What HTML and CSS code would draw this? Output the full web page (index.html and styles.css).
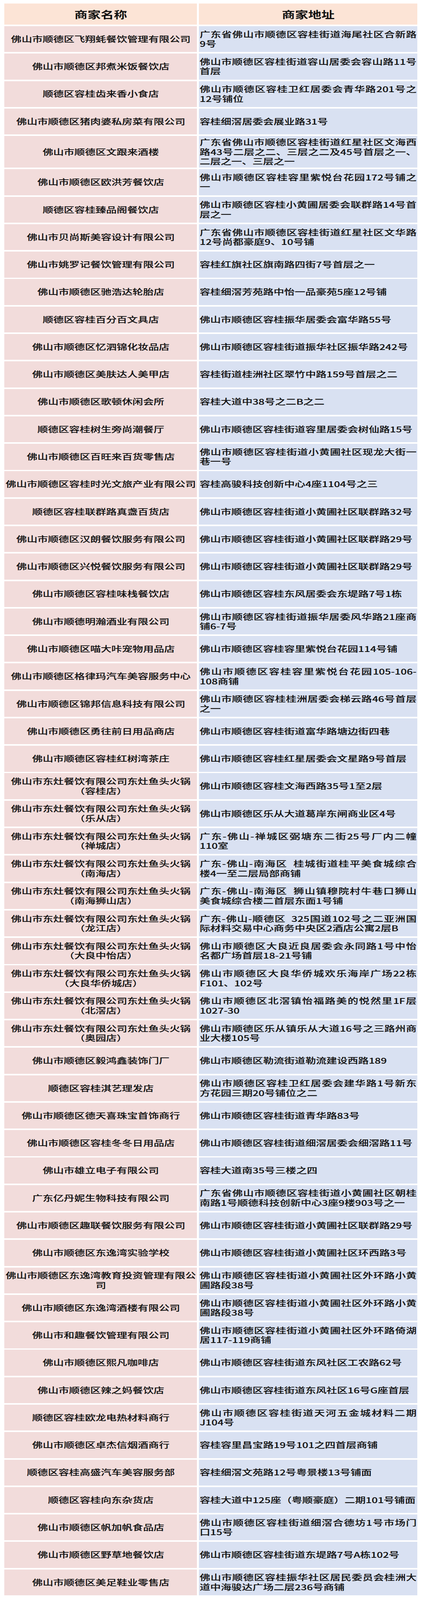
FILE: index.html
```html
<!DOCTYPE html>
<html lang="zh-CN">
<head>
<meta charset="utf-8">
<title>商家名单</title>
<link rel="stylesheet" href="styles.css">
</head>
<body>
<div class="sheet">
  <div class="grid">
    <div class="hd"><div class="ht">商家名称</div></div>
    <div class="hd"><div class="ht">商家地址</div></div>

    <div class="name"><div class="t">佛山市顺德区飞翔蚝餐饮管理有限公司</div></div>
    <div class="addr"><div class="t"><span class="ln fill">广东省佛山市顺德区容桂街道海尾社区合新路</span><span class="ln">9号</span></div></div>

    <div class="name"><div class="t">佛山市顺德区邦煮米饭餐饮店</div></div>
    <div class="addr"><div class="t"><span class="ln fill">佛山市顺德区容桂街道容山居委会容山路11号</span><span class="ln">首层</span></div></div>

    <div class="name"><div class="t">顺德区容桂齿来香小食店</div></div>
    <div class="addr"><div class="t"><span class="ln fill">佛山市顺德区容桂卫红居委会青华路201号之</span><span class="ln">12号铺位</span></div></div>

    <div class="name"><div class="t">佛山市顺德区猪肉婆私房菜有限公司</div></div>
    <div class="addr"><div class="t">容桂细滘居委会展业路31号</div></div>

    <div class="name"><div class="t">佛山市顺德区文跟来酒楼</div></div>
    <div class="addr"><div class="t"><span class="ln fill">广东省佛山市顺德区容桂街道红星社区文海西</span><span class="ln fill">路43号二层之二、三层之二及45号首层之一、</span><span class="ln">二层之一、三层之一</span></div></div>

    <div class="name"><div class="t">佛山市顺德区欧洪芳餐饮店</div></div>
    <div class="addr"><div class="t"><span class="ln fill">佛山市顺德区容桂容里紫悦台花园172号铺之</span><span class="ln">一</span></div></div>

    <div class="name"><div class="t">顺德区容桂臻品阁餐饮店</div></div>
    <div class="addr"><div class="t"><span class="ln fill">佛山市顺德区容桂小黄圃居委会联群路14号首</span><span class="ln">层之一</span></div></div>

    <div class="name"><div class="t">佛山市贝尚斯美容设计有限公司</div></div>
    <div class="addr"><div class="t"><span class="ln fill">广东省佛山市顺德区容桂街道红星社区文华路</span><span class="ln">12号尚都豪庭9、10号铺</span></div></div>

    <div class="name"><div class="t">佛山市姚罗记餐饮管理有限公司</div></div>
    <div class="addr"><div class="t">容桂红旗社区旗南路四街7号首层之一</div></div>

    <div class="name"><div class="t">佛山市顺德区驰浩达轮胎店</div></div>
    <div class="addr"><div class="t">容桂细滘芳苑路中怡一品豪苑5座12号铺</div></div>

    <div class="name"><div class="t">顺德区容桂百分百文具店</div></div>
    <div class="addr"><div class="t">佛山市顺德区容桂振华居委会富华路55号</div></div>

    <div class="name"><div class="t">佛山市顺德区忆泗锦化妆品店</div></div>
    <div class="addr"><div class="t">佛山市顺德区容桂街道振华社区振华路242号</div></div>

    <div class="name"><div class="t">佛山市顺德区美肤达人美甲店</div></div>
    <div class="addr"><div class="t">容桂街道桂洲社区翠竹中路159号首层之二</div></div>

    <div class="name"><div class="t">佛山市顺德区歌顿休闲会所</div></div>
    <div class="addr"><div class="t">容桂大道中38号之二B之二</div></div>

    <div class="name"><div class="t">顺德区容桂树生旁尚潮餐厅</div></div>
    <div class="addr"><div class="t">佛山市顺德区容桂街道容里居委会树仙路15号</div></div>

    <div class="name"><div class="t">佛山市顺德区百旺来百货零售店</div></div>
    <div class="addr"><div class="t"><span class="ln fill">佛山市顺德区容桂街道小黄圃社区现龙大街一</span><span class="ln">巷一号</span></div></div>

    <div class="name"><div class="t">佛山市顺德区容桂时光文旅产业有限公司</div></div>
    <div class="addr"><div class="t">容桂高骏科技创新中心4座1104号之三</div></div>

    <div class="name"><div class="t">顺德区容桂联群路真盏百货店</div></div>
    <div class="addr"><div class="t">佛山市顺德区容桂街道小黄圃社区联群路32号</div></div>

    <div class="name"><div class="t">佛山市顺德区汉朗餐饮服务有限公司</div></div>
    <div class="addr"><div class="t">佛山市顺德区容桂街道小黄圃社区联群路29号</div></div>

    <div class="name"><div class="t">佛山市顺德区兴悦餐饮服务有限公司</div></div>
    <div class="addr"><div class="t">佛山市顺德区容桂街道小黄圃社区联群路29号</div></div>

    <div class="name"><div class="t">佛山市顺德区容桂味栈餐饮店</div></div>
    <div class="addr"><div class="t">佛山市顺德区容桂东风居委会东堤路7号1栋</div></div>

    <div class="name"><div class="t">佛山市顺德明瀚酒业有限公司</div></div>
    <div class="addr"><div class="t"><span class="ln fill">佛山市顺德区容桂街道振华居委风华路21座商</span><span class="ln">铺6-7号</span></div></div>

    <div class="name"><div class="t">佛山市顺德区喵大咔宠物用品店</div></div>
    <div class="addr"><div class="t">佛山市顺德区容桂容里紫悦台花园114号铺</div></div>

    <div class="name"><div class="t">佛山市顺德区格律玛汽车美容服务中心</div></div>
    <div class="addr"><div class="t"><span class="ln fill">佛山市顺德区容桂容里紫悦台花园105-106-</span><span class="ln">108商铺</span></div></div>

    <div class="name"><div class="t">佛山市顺德区锦邦信息科技有限公司</div></div>
    <div class="addr"><div class="t"><span class="ln fill">佛山市顺德区容桂桂洲居委会梯云路46号首层</span><span class="ln">之一</span></div></div>

    <div class="name"><div class="t">佛山市顺德区勇往前日用品商店</div></div>
    <div class="addr"><div class="t">佛山市顺德区容桂街道富华路塘边街四巷</div></div>

    <div class="name"><div class="t">佛山市顺德区容桂红树湾茶庄</div></div>
    <div class="addr"><div class="t">佛山市顺德区容桂红星居委会文星路9号首层</div></div>

    <div class="name"><div class="t">佛山市东灶餐饮有限公司东灶鱼头火锅<br>（容桂店）</div></div>
    <div class="addr"><div class="t">佛山市顺德区容桂文海西路35号1至2层</div></div>

    <div class="name"><div class="t">佛山市东灶餐饮有限公司东灶鱼头火锅<br>（乐从店）</div></div>
    <div class="addr"><div class="t">佛山市顺德区乐从大道葛岸东闸商业区4号</div></div>

    <div class="name"><div class="t">佛山市东灶餐饮有限公司东灶鱼头火锅<br>（禅城店）</div></div>
    <div class="addr"><div class="t"><span class="ln fill">广东-佛山-禅城区弼塘东二街25号厂内二幢</span><span class="ln">110室</span></div></div>

    <div class="name"><div class="t">佛山市东灶餐饮有限公司东灶鱼头火锅<br>（南海店）</div></div>
    <div class="addr"><div class="t"><span class="ln fill">广东-佛山-南海区&nbsp; 桂城街道桂平美食城综合</span><span class="ln">楼4一至二层局部商铺</span></div></div>

    <div class="name"><div class="t">佛山市东灶餐饮有限公司东灶鱼头火锅<br>（南海狮山店）</div></div>
    <div class="addr"><div class="t"><span class="ln fill">广东-佛山-南海区&nbsp; 狮山镇穆院村牛巷口狮山</span><span class="ln">美食城综合楼二首层东面1号铺</span></div></div>

    <div class="name"><div class="t">佛山市东灶餐饮有限公司东灶鱼头火锅<br>（龙江店）</div></div>
    <div class="addr"><div class="t"><span class="ln fill">广东-佛山-顺德区&nbsp; 325国道102号之二亚洲国</span><span class="ln">际材料交易中心商务中央区2酒店公寓2层B</span></div></div>

    <div class="name"><div class="t">佛山市东灶餐饮有限公司东灶鱼头火锅<br>（大良中怡店）</div></div>
    <div class="addr"><div class="t"><span class="ln fill">佛山市顺德区大良近良居委会永同路1号中怡</span><span class="ln">名都广场首层18-21号铺</span></div></div>

    <div class="name"><div class="t">佛山市东灶餐饮有限公司东灶鱼头火锅<br>（大良华侨城店）</div></div>
    <div class="addr"><div class="t"><span class="ln fill">佛山市顺德区大良华侨城欢乐海岸广场22栋</span><span class="ln">F101、102号</span></div></div>

    <div class="name"><div class="t">佛山市东灶餐饮有限公司东灶鱼头火锅<br>（北滘店）</div></div>
    <div class="addr"><div class="t"><span class="ln fill">佛山市顺德区北滘镇怡福路美的悦然里1F层</span><span class="ln">1027-30</span></div></div>

    <div class="name"><div class="t">佛山市东灶餐饮有限公司东灶鱼头火锅<br>（奥园店）</div></div>
    <div class="addr"><div class="t"><span class="ln fill">佛山市顺德区乐从镇乐从大道16号之三路州商</span><span class="ln">业大楼105号</span></div></div>

    <div class="name"><div class="t">佛山市顺德区毅鸿鑫装饰门厂</div></div>
    <div class="addr"><div class="t">佛山市顺德区勒流街道勒流建设西路189</div></div>

    <div class="name"><div class="t">顺德区容桂淇艺理发店</div></div>
    <div class="addr"><div class="t"><span class="ln fill">佛山市顺德区容桂卫红居委会建华路1号新东</span><span class="ln">方花园三期20号铺位之二</span></div></div>

    <div class="name"><div class="t">佛山市顺德区德天喜珠宝首饰商行</div></div>
    <div class="addr"><div class="t">佛山市顺德区容桂街道青华路83号</div></div>

    <div class="name"><div class="t">佛山市顺德区容桂冬冬日用品店</div></div>
    <div class="addr"><div class="t">佛山市顺德区容桂街道细滘居委会细滘路11号</div></div>

    <div class="name"><div class="t">佛山市雄立电子有限公司</div></div>
    <div class="addr"><div class="t">容桂大道南35号三楼之四</div></div>

    <div class="name"><div class="t">广东亿丹妮生物科技有限公司</div></div>
    <div class="addr"><div class="t"><span class="ln fill">广东省佛山市顺德区容桂街道小黄圃社区朝桂</span><span class="ln">南路1号顺德科技创新中心3座9楼903号之一</span></div></div>

    <div class="name"><div class="t">佛山市顺德区趣联餐饮服务有限公司</div></div>
    <div class="addr"><div class="t">佛山市顺德区容桂街道小黄圃社区联群路29号</div></div>

    <div class="name"><div class="t">佛山市顺德区东逸湾实验学校</div></div>
    <div class="addr"><div class="t">佛山市顺德区容桂街道小黄圃社区环西路3号</div></div>

    <div class="name"><div class="t">佛山市顺德区东逸湾教育投资管理有限公<br>司</div></div>
    <div class="addr"><div class="t"><span class="ln fill">佛山市顺德区容桂街道小黄圃社区外环路小黄</span><span class="ln">圃路段38号</span></div></div>

    <div class="name"><div class="t">佛山市顺德区东逸湾酒楼有限公司</div></div>
    <div class="addr"><div class="t"><span class="ln fill">佛山市顺德区容桂街道小黄圃社区外环路小黄</span><span class="ln">圃路段38号</span></div></div>

    <div class="name"><div class="t">佛山市和趣餐饮管理有限公司</div></div>
    <div class="addr"><div class="t"><span class="ln fill">佛山市顺德区容桂街道小黄圃社区外环路倚湖</span><span class="ln">居117-119商铺</span></div></div>

    <div class="name"><div class="t">佛山市顺德区熙凡咖啡店</div></div>
    <div class="addr"><div class="t">佛山市顺德区容桂街道东风社区工农路62号</div></div>

    <div class="name"><div class="t">佛山市顺德区辣之妈餐饮店</div></div>
    <div class="addr"><div class="t">佛山市顺德区容桂街道东风社区16号G座首层</div></div>

    <div class="name"><div class="t">顺德区容桂欧龙电热材料商行</div></div>
    <div class="addr"><div class="t"><span class="ln fill">佛山市顺德区容桂街道天河五金城材料二期</span><span class="ln">J104号</span></div></div>

    <div class="name"><div class="t">佛山市顺德区卓杰信烟酒商行</div></div>
    <div class="addr"><div class="t">容桂容里昌宝路19号101之四首层商铺</div></div>

    <div class="name"><div class="t">顺德区容桂高盛汽车美容服务部</div></div>
    <div class="addr"><div class="t">容桂细滘文苑路12号粤景楼13号铺面</div></div>

    <div class="name"><div class="t">顺德区容桂向东杂货店</div></div>
    <div class="addr"><div class="t">容桂大道中125座（粤顺豪庭）二期101号铺面</div></div>

    <div class="name"><div class="t">佛山市顺德区帆加帆食品店</div></div>
    <div class="addr"><div class="t"><span class="ln fill">佛山市顺德区容桂街道细滘合德坊1号市场门</span><span class="ln">口15号</span></div></div>

    <div class="name"><div class="t">佛山市顺德区野草地餐饮店</div></div>
    <div class="addr"><div class="t">佛山市顺德区容桂街道东堤路7号A栋102号</div></div>

    <div class="name"><div class="t">佛山市顺德区美足鞋业零售店</div></div>
    <div class="addr"><div class="t"><span class="ln fill">佛山市顺德区容桂振华社区居民委员会桂洲大</span><span class="ln">道中海骏达广场二层236号商铺</span></div></div>
  </div>
</div>
</body>
</html>
```

FILE: styles.css
```css
/* The browser frame is 4096px tall, so the 4934px-tall sheet is laid out
   at 0.83 of its height; text is widened to keep the source proportions. */
html, body {
  margin: 0;
  padding: 0;
  background: #ffffff;
}

body {
  font-family: "Noto Sans CJK SC", "Noto Sans", "Liberation Sans", sans-serif;
  color: #111111;
}

.sheet {
  padding: 9.13px 12px 6px 11px;
}

.grid {
  display: grid;
  grid-template-columns: 493px 559px;
  column-gap: 5px;
  row-gap: 3.885px;
}

.hd {
  height: 53.96px;
  background: #fce4d6;
  display: flex;
  align-items: center;
  justify-content: center;
}

.ht {
  font-size: 24.9px;
  font-weight: 700;
  line-height: 30px;
  transform: scaleX(1.355);
}

.name,
.addr {
  box-sizing: border-box;
  min-height: 66.41px;
  padding: 3.94px 2px;
  display: flex;
  align-items: center;
  font-size: 19.92px;
  font-weight: 500;
  line-height: 24.49px;
}

.name {
  background: #f2dcdb;
  justify-content: center;
  text-align: center;
}

.addr {
  background: #d9e1f2;
  justify-content: flex-start;
  text-align: left;
}

.t {
  width: calc(100% / 1.3584);
  flex: none;
  white-space: nowrap;
  transform: scaleX(1.3584);
  -webkit-text-stroke: 0.2px #111111;
}

.name .t {
  transform-origin: 50% 50%;
}

.addr .t {
  transform-origin: 0 50%;
}

.ln {
  display: block;
  white-space: nowrap;
}

.ln.fill {
  white-space: normal;
  text-align: justify;
  text-align-last: justify;
}
```
